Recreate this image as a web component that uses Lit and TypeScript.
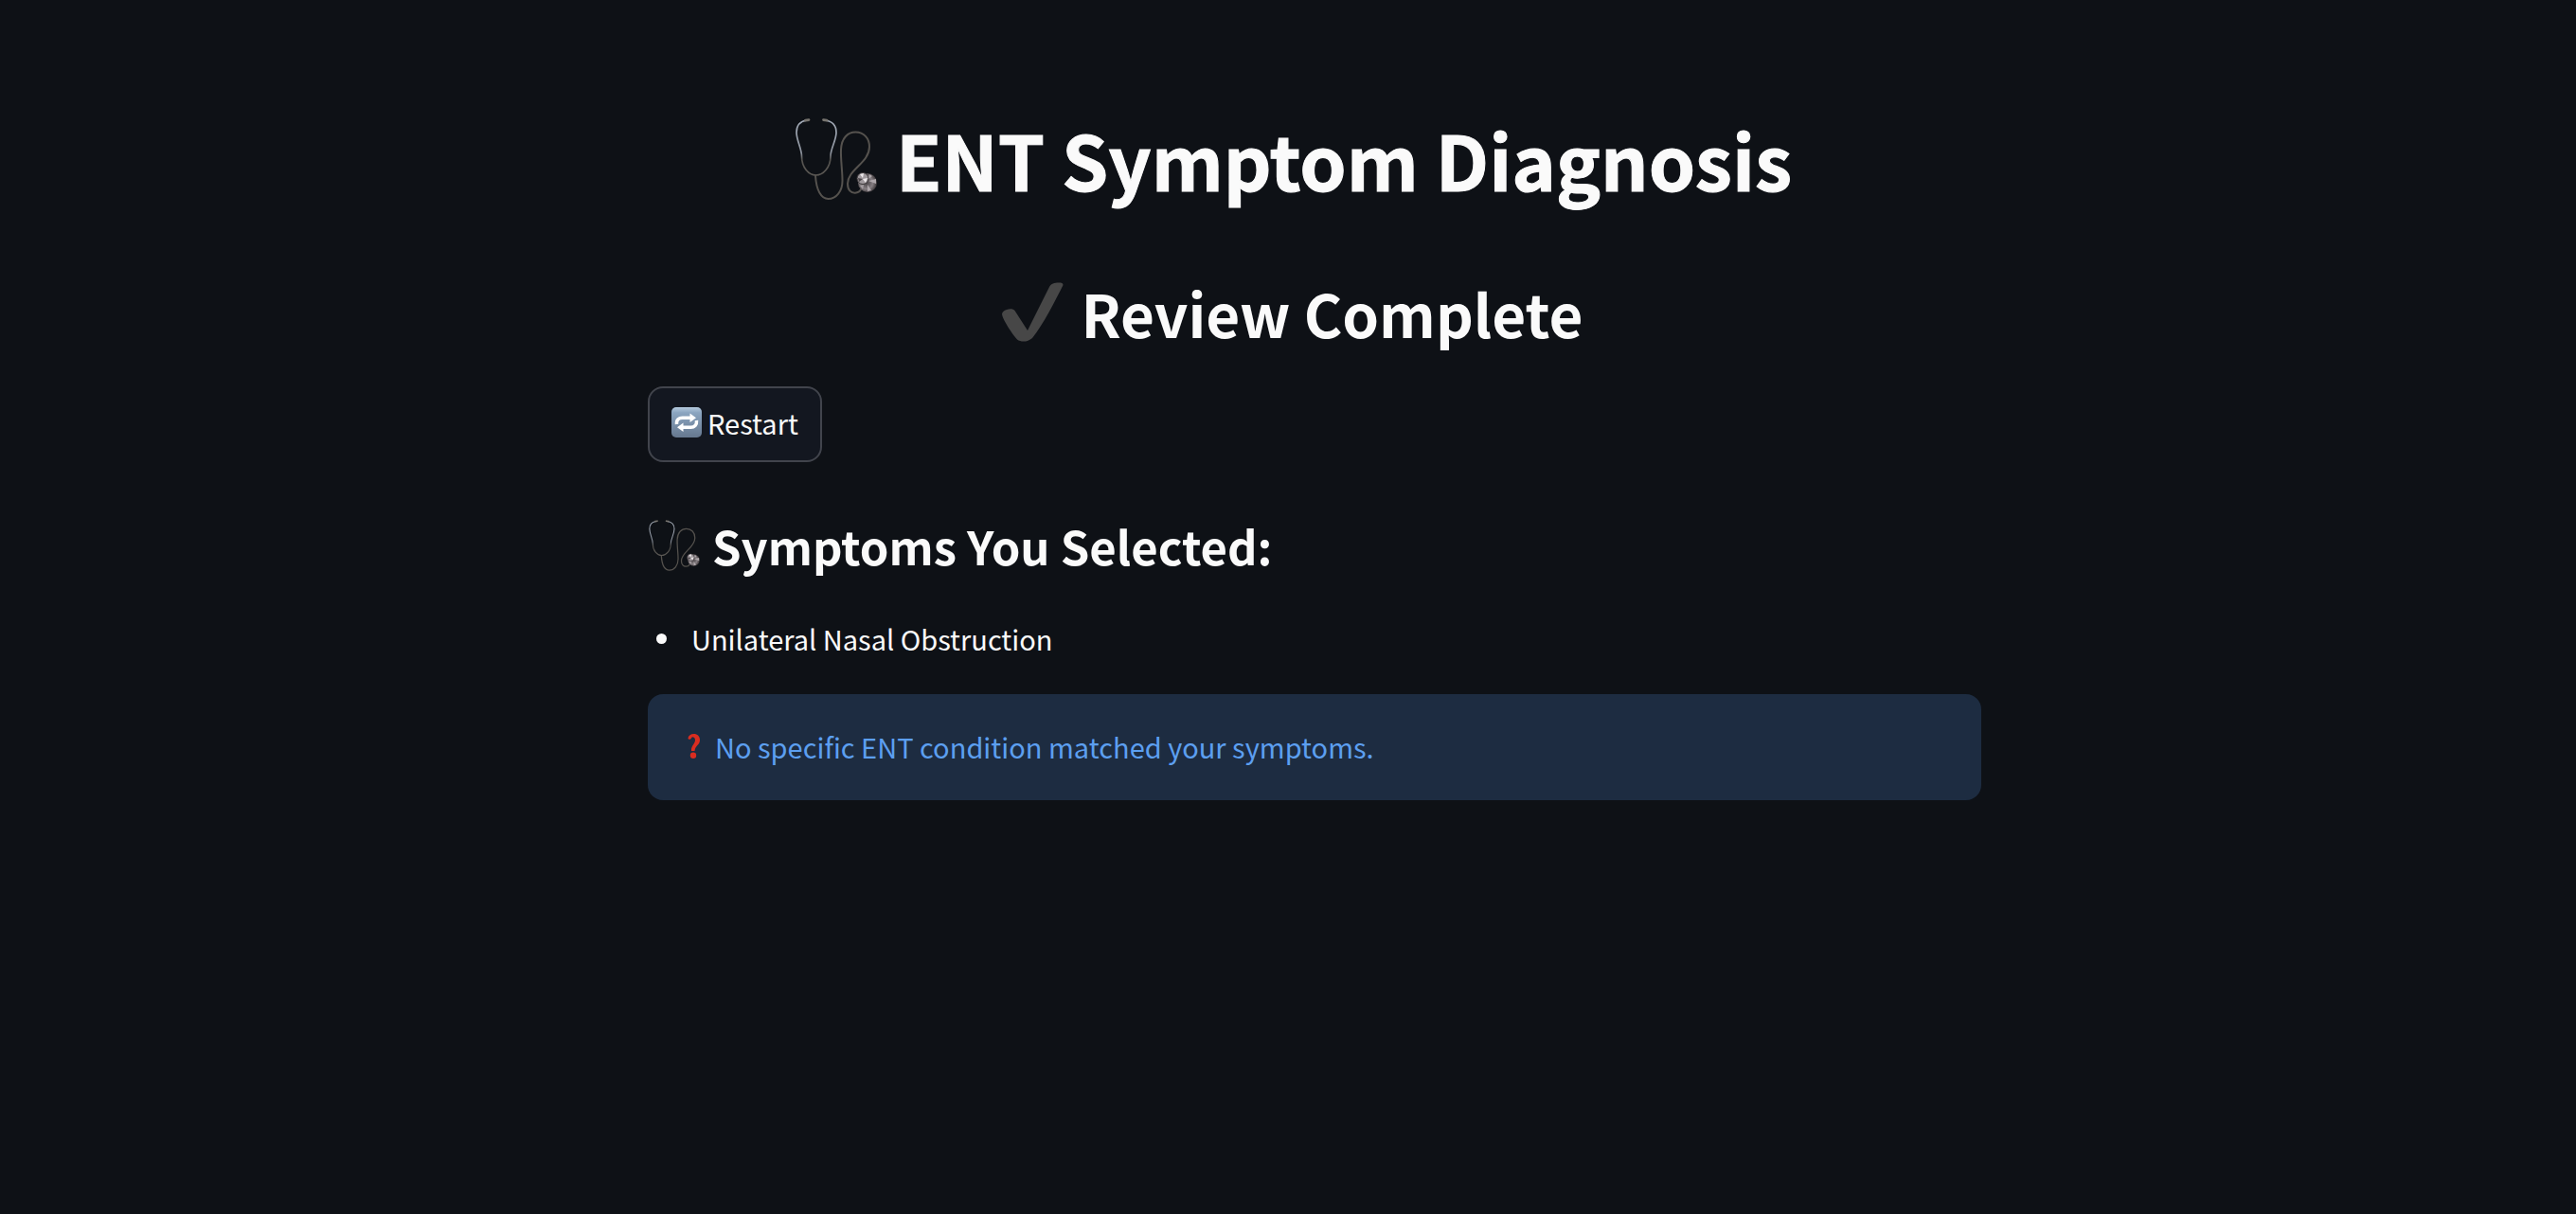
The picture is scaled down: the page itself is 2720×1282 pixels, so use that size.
import { LitElement, html, css, svg } from "lit";
import { customElement, property } from "lit/decorators.js";

@customElement("ent-icon")
class EntIcon extends LitElement {
  @property() name = "stethoscope";

  static styles = css`
    :host {
      display: inline-flex;
      flex: none;
    }
    .glyph {
      display: block;
      width: 100%;
      height: 100%;
    }
  `;

  private stethoscope() {
    return svg`
      <defs>
        <linearGradient id="tube" x1="0" y1="12" x2="0" y2="71" gradientUnits="userSpaceOnUse">
          <stop offset="0" stop-color="#a4acb8" />
          <stop offset="0.6" stop-color="#8d939e" />
          <stop offset="0.72" stop-color="#55534f" />
          <stop offset="1" stop-color="#5a5753" />
        </linearGradient>
        <radialGradient id="disc" cx="0.45" cy="0.5" r="0.55">
          <stop offset="0" stop-color="#4a4548" />
          <stop offset="0.6" stop-color="#857e82" />
          <stop offset="1" stop-color="#3b3638" />
        </radialGradient>
      </defs>
      <g fill="none" stroke-linecap="round">
        <path d="M33 71.500C34 87 39 96 46.500 96C55 96 61.500 88 61.500 77C61.500 66 59.500 54 60 44C60.500 32 67 25.500 75.500 25.500C84 25.500 90 32 90 41C90 58 67 65 67 80C67 87 71 90 75 89.700C78 89.500 80 88 81 86" stroke="#55524e" stroke-width="2" />
        <path d="M24 13C17 14 13 18 13 26C13 34 18.500 43 18.500 51C18.500 63 26 71 33.500 71C41 71 49 63 49 51C49 43 55 34 55 26C55 18 51 14 43 13" stroke="url(#tube)" stroke-width="1.700" />
        <path d="M22.500 13.200L26 12.600M41.500 12.600L45 13.200" stroke="#77746f" stroke-width="2.800" />
      </g>
      <circle cx="88" cy="79" r="10" fill="url(#disc)" />
      <path d="M89 77L97 75V80ZM88 81L92 87L88 88ZM88 76L90 70L93 72Z" fill="#aea7ab" />
      <circle cx="83" cy="74.500" r="6" fill="#a09a9e" stroke="#3a3638" stroke-width="1" />
      <path d="M83 74L80 70L84 69ZM83 75L88 74L86 79Z" fill="#ece8ea" />
      <path d="M83 75L78 74L79 78Z" fill="#4a4548" />
      <path d="M80 82L84 81L83 86Z" fill="#a59ea2" />`;
  }

  private check() {
    return svg`
      <path d="M5 29C2 30 0 31.500 0 34C1 40 11 55 16 60.500C20 63.500 27 63.500 32 59C44 44 56 20 64.500 3C64.500 1 63 .5 60 .5C55 .5 52 1.500 50 5L27 51L13.500 30C12 28 8 28 5 29Z" fill="#474747" />`;
  }

  private repeat() {
    return svg`
      <defs>
        <linearGradient id="tile" x1="0" y1="0" x2="0" y2="1">
          <stop offset="0" stop-color="#b5cade" />
          <stop offset="0.18" stop-color="#8ba5c0" />
          <stop offset="1" stop-color="#66788f" />
        </linearGradient>
      </defs>
      <rect width="32" height="32" rx="5" fill="url(#tile)" />
      <g fill="none" stroke="#fff" stroke-width="3.500">
        <path d="M5.500 18C5 13 8 11.200 11.500 11.200H20" />
        <path d="M26.500 14C27 19 24 21.300 20.500 21.300H12" />
      </g>
      <path d="M19.500 6.500L26 11.200L19.500 16ZM12.500 16.500L6 21.300L12.500 26Z" fill="#fff" />`;
  }

  private question() {
    return svg`
      <path d="M0.500 4.500C1 1.500 3.500 0 6.500 0C10.500 0 13 2.500 13 6.500C13 11.500 8 12.500 7.500 18H4C3.500 12.500 8 10.500 8 6.500C8 4.500 6.500 3.300 5 3.300C4 3.300 4.200 5.800 2.500 5.800C1.200 5.800 .5 5.500 .5 4.500Z" fill="#d92d20" />
      <circle cx="6" cy="22.800" r="3.200" fill="#d92d20" />`;
  }

  render() {
    const icons: Record<string, [string, unknown]> = {
      stethoscope: ["10 10 90 88", this.stethoscope()],
      check: ["0 0 65 64", this.check()],
      repeat: ["0 0 32 32", this.repeat()],
      question: ["0 0 13 26", this.question()],
    };
    const [box, art] = icons[this.name];
    return html`<svg class="glyph" viewBox=${box} aria-hidden="true">${art}</svg>`;
  }
}

@customElement("app-root")
class AppRoot extends LitElement {
  @property({ attribute: false }) symptoms = ["Unilateral Nasal Obstruction"];

  static styles = css`
    :host {
      display: block;
      box-sizing: border-box;
      min-height: 100vh;
      padding: 108px 32px 64px 88px;
      background: #0e1116;
      color: #fafafa;
      font-family: "Source Sans Pro", "Noto Sans CJK JP", sans-serif;
      font-size: 29px;
      line-height: 48px;
    }
    .page {
      max-width: 1408px;
      margin: 0 auto;
      display: flex;
      flex-direction: column;
      align-items: stretch;
    }
    h1, h2, h3, ul, p {
      margin: 0;
    }
    .title, .status {
      display: flex;
      justify-content: center;
      align-items: center;
      gap: 18px;
      padding-right: 46px;
    }
    .title {
      font-size: 79px;
      font-weight: 700;
      line-height: 120px;
      -webkit-text-stroke: 1px currentColor;
    }
    .title-icon { width: 90px; height: 88px; }
    .status {
      margin-top: 50px;
      font-size: 62px;
      font-weight: 600;
      line-height: 104px;
    }
    .status-icon { width: 65px; height: 64px; }
    .restart {
      align-self: flex-start;
      display: flex;
      align-items: center;
      gap: 6px;
      box-sizing: border-box;
      height: 80px;
      margin-top: 26px;
      padding: 0 23px 4px;
      border: 2px solid #41444c;
      border-radius: 16px;
      background: #131720;
      color: inherit;
      font: inherit;
      cursor: pointer;
    }
    .restart-icon { width: 32px; height: 32px; }
    .heading {
      display: flex;
      align-items: center;
      gap: 12px;
      margin-top: 48px;
      font-size: 49px;
      font-weight: 600;
      line-height: 80px;
    }
    .heading-icon { width: 56px; height: 56px; }
    .symptoms {
      margin-top: 34px;
      padding: 0 0 0 9px;
      list-style: none;
    }
    .symptom {
      display: flex;
      align-items: center;
      gap: 26px;
    }
    .symptom::before {
      content: "";
      width: 11px;
      height: 11px;
      border-radius: 50%;
      background: currentColor;
    }
    .notice {
      display: flex;
      align-items: center;
      gap: 16px;
      margin-top: 35px;
      padding: 31px 42px 33px;
      border-radius: 16px;
      background: #1d2c41;
      color: #5c9ff0;
    }
    .notice-icon { width: 13px; height: 26px; }
  `;

  render() {
    return html`
      <main class="page">
        <h1 class="title"><ent-icon class="title-icon" name="stethoscope"></ent-icon>ENT Symptom Diagnosis</h1>
        <h2 class="status"><ent-icon class="status-icon" name="check"></ent-icon>Review Complete</h2>
        <button class="restart" type="button"><ent-icon class="restart-icon" name="repeat"></ent-icon>Restart</button>
        <h3 class="heading"><ent-icon class="heading-icon" name="stethoscope"></ent-icon>Symptoms You Selected:</h3>
        <ul class="symptoms">
          ${this.symptoms.map((s) => html`<li class="symptom">${s}</li>`)}
        </ul>
        <p class="notice" role="status"><ent-icon class="notice-icon" name="question"></ent-icon>No specific ENT condition matched your symptoms.</p>
      </main>
    `;
  }
}
